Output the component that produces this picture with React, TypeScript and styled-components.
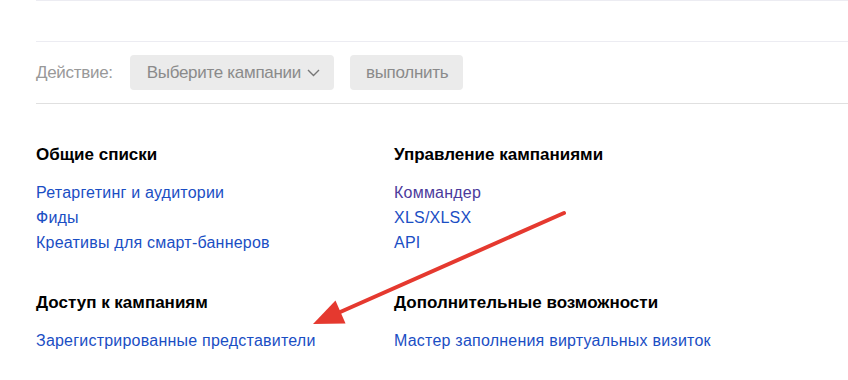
import React from "react";
import styled, { createGlobalStyle } from "styled-components";

const GlobalStyle = createGlobalStyle`
	body {
		margin: 0;
		background: #fff;
		font-family: "Liberation Sans", Arial, sans-serif;
	}
`;

const Page = styled.div`
	position: relative;
	width: 848px;
	height: 380px;
	overflow: hidden;
	padding-left: 36px;
	box-sizing: border-box;
`;

const TopGap = styled.div`
	height: 40px;
	border-top: 1px solid #ececf2;
	border-bottom: 1px solid #ececf2;
`;

const Toolbar = styled.div`
	display: flex;
	align-items: center;
	height: 61px;
	border-bottom: 1px solid #e0e0e0;
	font-size: 17px;
	letter-spacing: -0.3px;
`;

const Label = styled.span`
	color: #999;
	margin-right: 17px;
`;

const GreyButton = styled.div<{ $wide?: boolean }>`
	display: flex;
	align-items: center;
	gap: 6px;
	height: 35px;
	padding: ${(p) => (p.$wide ? "0 14px 0 17px" : "0 15px 0 16px")};
	margin-right: 16px;
	background: #ebebeb;
	border-radius: 4px;
	color: #8a8a8a;
	box-sizing: border-box;
`;

const Sections = styled.div`
	display: grid;
	grid-template-columns: 358px 1fr;
	row-gap: 36px;
	padding-top: 39px;
`;

const Block = styled.div`
	display: flex;
	flex-direction: column;
`;

const Heading = styled.h3`
	margin: 0 0 13px;
	font-size: 17px;
	line-height: 24px;
	font-weight: bold;
	color: #000;
`;

const Link = styled.a<{ $visited?: boolean }>`
	font-size: 16px;
	line-height: 25px;
	letter-spacing: 0.22px;
	color: ${(p) => (p.$visited ? "#4b3a9c" : "#1a4ec4")};
	text-decoration: none;
`;

const Arrow = styled.svg`
	position: absolute;
	left: 0;
	top: 0;
	pointer-events: none;
`;

const blocks = [
	{
		title: "Общие списки",
		links: ["Ретаргетинг и аудитории", "Фиды", "Креативы для смарт-баннеров"],
	},
	{
		title: "Управление кампаниями",
		links: ["Коммандер", "XLS/XLSX", "API"],
	},
	{
		title: "Доступ к кампаниям",
		links: ["Зарегистрированные представители"],
	},
	{
		title: "Дополнительные возможности",
		links: ["Мастер заполнения виртуальных визиток"],
	},
];

function App() {
	return (
		<Page>
			<GlobalStyle />
			<TopGap />
			<Toolbar>
				<Label>Действие:</Label>
				<GreyButton $wide>
					Выберите кампании
					<svg width="13" height="8" viewBox="0 0 13 8">
						<path d="M1 1l5.5 5.5L12 1" fill="none" stroke="#777" strokeWidth="1.4" />
					</svg>
				</GreyButton>
				<GreyButton>выполнить</GreyButton>
			</Toolbar>
			<Sections>
				{blocks.map((block) => (
					<Block key={block.title}>
						<Heading>{block.title}</Heading>
						{block.links.map((link) => (
							<Link key={link} href="#" $visited={link === "Коммандер"}>
								{link}
							</Link>
						))}
					</Block>
				))}
			</Sections>
			<Arrow width="848" height="380" viewBox="0 0 848 380">
				<line x1="564" y1="213" x2="338" y2="313" stroke="#e5392f" strokeWidth="4" strokeLinecap="round" />
				<polygon points="313,324 335.5,300.5 345.5,323.5" fill="#e5392f" />
			</Arrow>
		</Page>
	);
}

export default App;
